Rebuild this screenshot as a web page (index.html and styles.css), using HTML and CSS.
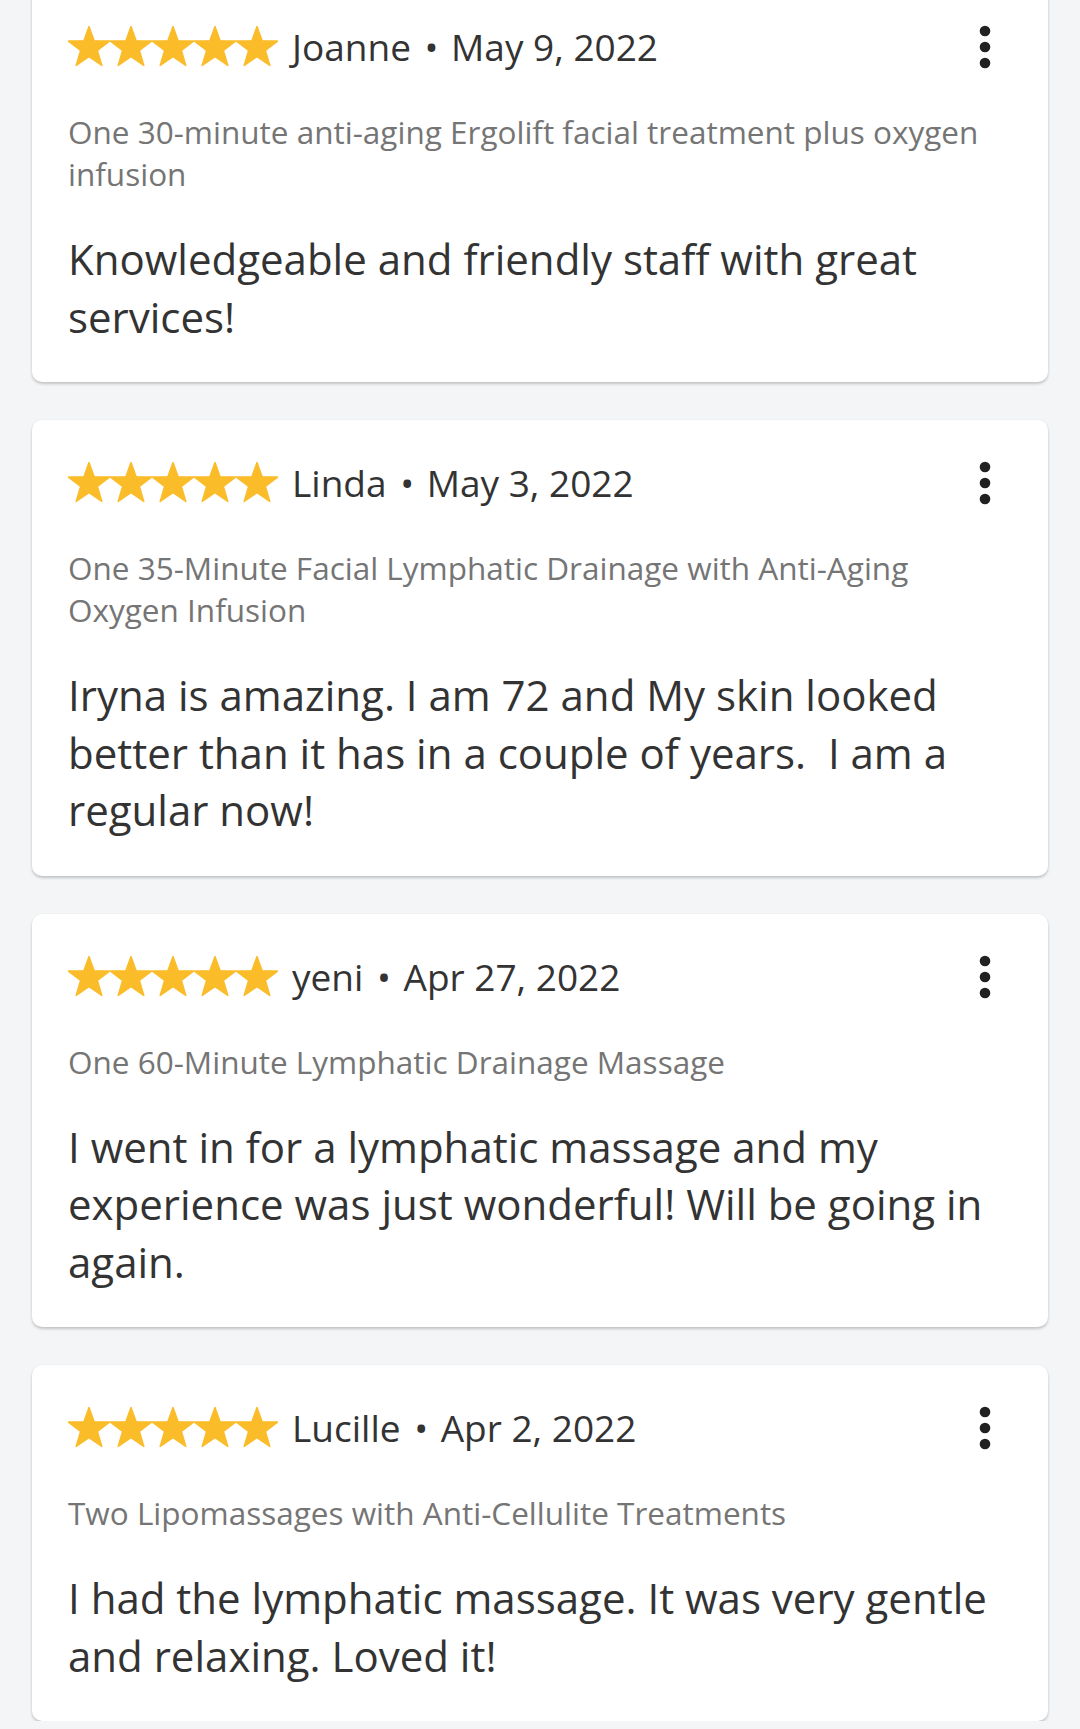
FILE: index.html
```html
<!DOCTYPE html>
<html lang="en">
<head>
<meta charset="utf-8">
<title>Reviews</title>
<link rel="stylesheet" href="styles.css">
</head>
<body>
<svg width="0" height="0" class="defs" aria-hidden="true">
  <defs>
    <symbol id="star" viewBox="0 0 42 42">
      <polygon points="21,0.5 26.1,14.7 41.6,15.1 29.4,24.4 33.8,39.5 21,30.6 8.2,39.5 12.6,24.4 0.4,15.1 15.9,14.7" stroke="#fbbc2a" stroke-width="1.5" stroke-linejoin="round" fill="#fbbc2a"/>
    </symbol>
    <symbol id="more" viewBox="0 0 24 24">
      <circle cx="12" cy="6" r="2"/>
      <circle cx="12" cy="12" r="2"/>
      <circle cx="12" cy="18" r="2"/>
    </symbol>
  </defs>
</svg>

<main class="list">
  <article class="card">
    <header class="head">
      <div class="stars">
        <svg class="star"><use href="#star"/></svg><svg class="star"><use href="#star"/></svg><svg class="star"><use href="#star"/></svg><svg class="star"><use href="#star"/></svg><svg class="star"><use href="#star"/></svg>
      </div>
      <span class="meta">Joanne <span class="dot">•</span> May 9, 2022</span>
      <button class="more" aria-label="More"><svg viewBox="0 0 24 24"><use href="#more"/></svg></button>
    </header>
    <p class="deal">One 30-minute anti-aging Ergolift facial treatment plus oxygen infusion</p>
    <p class="text">Knowledgeable and friendly staff with great services!</p>
  </article>

  <article class="card">
    <header class="head">
      <div class="stars">
        <svg class="star"><use href="#star"/></svg><svg class="star"><use href="#star"/></svg><svg class="star"><use href="#star"/></svg><svg class="star"><use href="#star"/></svg><svg class="star"><use href="#star"/></svg>
      </div>
      <span class="meta">Linda <span class="dot">•</span> May 3, 2022</span>
      <button class="more" aria-label="More"><svg viewBox="0 0 24 24"><use href="#more"/></svg></button>
    </header>
    <p class="deal">One 35-Minute Facial Lymphatic Drainage with Anti-Aging Oxygen Infusion</p>
    <p class="text">Iryna is amazing. I am 72 and My skin looked better than it has in a couple of years.&nbsp; I am a regular now!</p>
  </article>

  <article class="card">
    <header class="head">
      <div class="stars">
        <svg class="star"><use href="#star"/></svg><svg class="star"><use href="#star"/></svg><svg class="star"><use href="#star"/></svg><svg class="star"><use href="#star"/></svg><svg class="star"><use href="#star"/></svg>
      </div>
      <span class="meta">yeni <span class="dot">•</span> Apr 27, 2022</span>
      <button class="more" aria-label="More"><svg viewBox="0 0 24 24"><use href="#more"/></svg></button>
    </header>
    <p class="deal">One 60-Minute Lymphatic Drainage Massage</p>
    <p class="text">I went in for a lymphatic massage and my experience was just wonderful! Will be going in again.</p>
  </article>

  <article class="card">
    <header class="head">
      <div class="stars">
        <svg class="star"><use href="#star"/></svg><svg class="star"><use href="#star"/></svg><svg class="star"><use href="#star"/></svg><svg class="star"><use href="#star"/></svg><svg class="star"><use href="#star"/></svg>
      </div>
      <span class="meta">Lucille <span class="dot">•</span> Apr 2, 2022</span>
      <button class="more" aria-label="More"><svg viewBox="0 0 24 24"><use href="#more"/></svg></button>
    </header>
    <p class="deal">Two Lipomassages with Anti-Cellulite Treatments</p>
    <p class="text">I had the lymphatic massage. It was very gentle and relaxing. Loved it!</p>
  </article>
</main>
</body>
</html>
```

FILE: styles.css
```css
* {
  box-sizing: border-box;
}

html, body {
  margin: 0;
  padding: 0;
  background: #f4f5f7;
}

body {
  font-family: "Open Sans", "Noto Sans", "Liberation Sans", sans-serif;
  color: #333333;
  overflow: hidden;
}

.defs {
  position: absolute;
  width: 0;
  height: 0;
}

.list {
  display: flex;
  flex-direction: column;
  gap: 38px;
  padding: 0 32px;
  margin-top: -16px;
}

.card {
  background: #ffffff;
  border-radius: 10px;
  padding: 36px 36px 37px 36px;
  box-shadow: 0 2px 3px rgba(0, 0, 0, 0.2), 0 0 2px rgba(0, 0, 0, 0.05);
}

.head {
  display: flex;
  align-items: center;
  height: 54px;
}

.stars {
  display: flex;
  flex: none;
}

.star {
  width: 42px;
  height: 42px;
  display: block;
}

.meta {
  margin-left: 14px;
  font-size: 37px;
  line-height: 54px;
  color: #333333;
  white-space: nowrap;
  flex: 1;
}

.dot {
  margin: 0 3px 0 4px;
}

.more {
  flex: none;
  width: 64px;
  height: 64px;
  margin-right: -5px;
  padding: 0;
  border: 0;
  background: transparent;
  fill: #212121;
}

.more svg {
  width: 64px;
  height: 64px;
  display: block;
}

.deal {
  margin: 37px 0 0 0;
  font-size: 31.5px;
  line-height: 42px;
  color: #757575;
}

.text {
  margin: 35px 0 0 0;
  font-size: 42px;
  line-height: 57.5px;
  color: #333333;
}
```
